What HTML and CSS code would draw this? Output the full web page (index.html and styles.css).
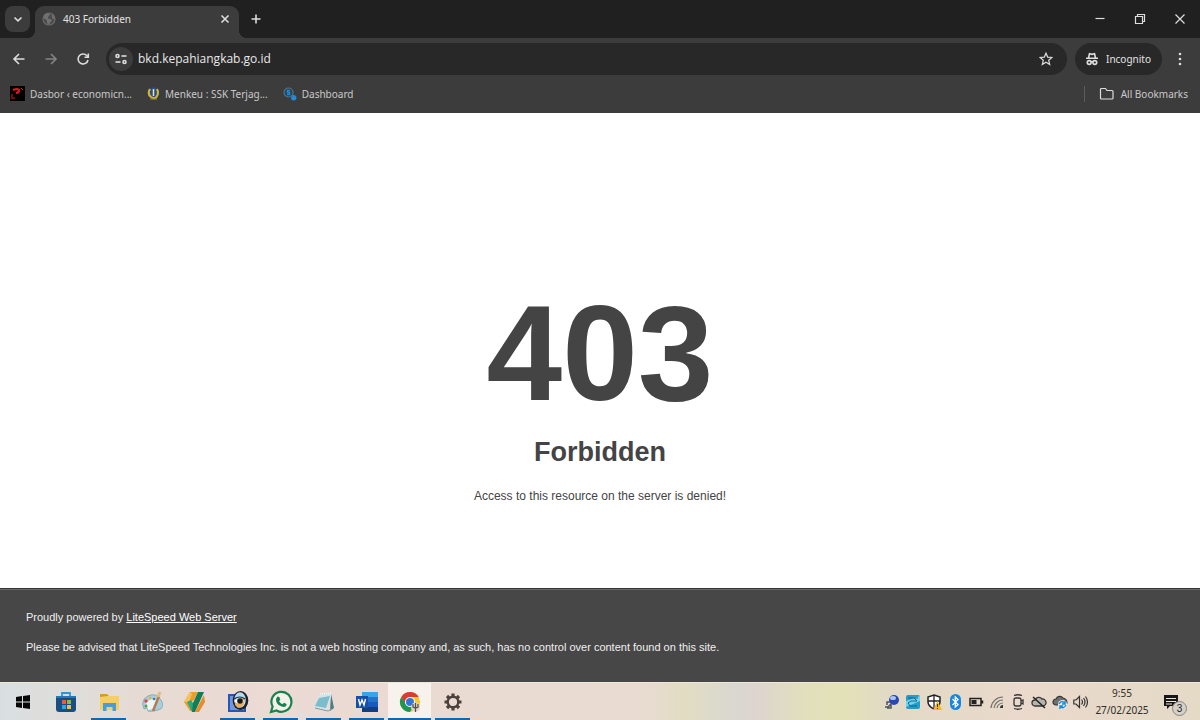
FILE: index.html
```html
<!DOCTYPE html>
<html lang="en">
<head>
<meta charset="utf-8">
<title>403 Forbidden</title>
<link rel="stylesheet" href="styles.css">
</head>
<body>
<header class="browser">
  <div class="tabstrip">
    <button class="tab-search" aria-label="Search tabs"><svg width="10" height="10" viewBox="0 0 10 10"><path class="line bold" d="M1.500 3.500 5 6.800 8.500 3.500"/></svg></button>
    <div class="tab">
      <svg width="14" height="14" viewBox="0 0 14 14"><circle cx="7" cy="7" r="6" fill="#4b4b4b" stroke="#686868" stroke-width="1.200"/><path fill="#707070" d="M2 3.500 5 1l3 .5-.5 2L6 5v1.500l2.500.5 1.500 2-2 1.500L7 13 5 11V8.500L1.500 6zM10 2l2.500 3v3L10 6z"/></svg>
      <span class="tab-title">403 Forbidden</span>
      <button class="icon-btn" aria-label="Close tab"><svg width="10" height="10" viewBox="0 0 10 10"><path class="line bold" d="m1.500 1.500 7 7m0-7-7 7"/></svg></button>
    </div>
    <button class="icon-btn new-tab" aria-label="New tab"><svg width="12" height="12" viewBox="0 0 12 12"><path class="line bold" d="M6 1.500v9M1.500 6h9"/></svg></button>
    <div class="window-controls">
      <button class="icon-btn" aria-label="Minimize"><svg width="12" height="12" viewBox="0 0 12 12"><path class="line" d="M1.500 5.500h9"/></svg></button>
      <button class="icon-btn" aria-label="Restore"><svg width="12" height="12" viewBox="0 0 12 12"><path class="line" d="M1.500 3.500h7v7h-7zM3.500 3.500v-2h7v7h-2"/></svg></button>
      <button class="icon-btn" aria-label="Close"><svg width="12" height="12" viewBox="0 0 12 12"><path class="line" d="m1.500 1.500 9 9m0-9-9 9"/></svg></button>
    </div>
  </div>
  <div class="toolbar">
    <nav class="nav-buttons" aria-label="History">
      <button class="icon-btn" aria-label="Back"><svg width="14" height="14" viewBox="0 0 14 14"><path class="line bold" d="M12.500 7H2.500M7 2 2 7l5 5"/></svg></button>
      <button class="icon-btn dim" aria-label="Forward"><svg width="14" height="14" viewBox="0 0 14 14"><path class="line bold" d="M1.500 7h10M7 2l5 5-5 5"/></svg></button>
      <button class="icon-btn" aria-label="Reload"><svg width="14" height="14" viewBox="0 0 14 14"><path class="line bold" d="M12 8a5 5 0 1 1-1.300-4.500L12 5"/><path class="line bold" d="M12.300 1.500V5.300H8.500"/></svg></button>
    </nav>
    <div class="omnibox">
      <button class="site-info" aria-label="Site information"><svg width="14" height="14" viewBox="0 0 14 14"><g class="line bold"><circle cx="3.500" cy="4" r="1.500"/><path d="M7.500 4H12.500"/><circle cx="10.500" cy="10" r="1.500"/><path d="M1.500 10h5"/></g></svg></button>
      <input class="url" type="text" value="bkd.kepahiangkab.go.id" aria-label="Address">
      <button class="icon-btn" aria-label="Bookmark this page"><svg width="14" height="14" viewBox="0 0 14 14"><path class="line" d="m7 1.200 1.700 3.900 4.200.4-3.200 2.800 1 4.200L7 10.200l-3.700 2.300 1-4.200L1.100 5.500l4.200-.4z"/></svg></button>
    </div>
    <button class="incognito"><svg width="14" height="14" viewBox="0 0 14 14"><g class="line bold"><path d="M3.500 6 4.500 1.800l2.500.6 2.500-.6 1 4.200M1 6.300h12"/><circle cx="4.200" cy="10.500" r="1.900"/><circle cx="9.800" cy="10.500" r="1.900"/><path d="M6 10q1-.8 2 0"/></g></svg>Incognito</button>
    <button class="icon-btn" aria-label="Menu"><svg width="14" height="16" viewBox="0 0 14 16"><g fill="#ddd"><circle cx="7" cy="3" r="1.300"/><circle cx="7" cy="8" r="1.300"/><circle cx="7" cy="13" r="1.300"/></g></svg></button>
  </div>
  <nav class="bookmarks" aria-label="Bookmarks">
    <a href="#"><svg width="15" height="15" viewBox="0 0 15 15"><path fill="#050000" d="M0 0h15v15H0z"/><g fill="none" stroke="#e01818"><path stroke-width="2.200" d="M3 4q5-2 6 0 0 3-3 3"/><path stroke-width="1" d="M11 2l2 2M2 8v5M5 12H3"/></g></svg>Dasbor ‹ economicn...</a>
    <a href="#"><svg width="13" height="13" viewBox="0 0 13 13"><path fill="#284f91" d="M6.500 0 12 3v5L6.500 12 1 8V3z"/><path fill="none" stroke="#d8b72c" stroke-width="2" d="M3 2Q0 7 4 10t6-1q2-3 0-7"/><path stroke="#eee3a0" stroke-width="1.500" d="M6.500 2v7"/><path stroke="#8a8b4b" d="M3 12h7"/></svg>Menkeu : SSK Terjag...</a>
    <a href="#"><svg width="14" height="14" viewBox="0 0 14 14"><circle cx="5.500" cy="5.500" r="4.500" fill="#30414e" stroke="#53758d" stroke-width="1.200"/><path fill="none" stroke="#168ce0" stroke-width="1.500" d="M7 3.500H4.500v2h2v2H4"/><circle cx="10.700" cy="10.700" r="2.700" fill="#218bdc"/><path stroke="#2675b5" d="m8 8 2 2"/></svg>Dashboard</a>
    <a class="all-bookmarks" href="#"><svg width="16" height="14" viewBox="0 0 16 14"><path class="line" d="M2.500 1.500h4l1.500 2h5q1 0 1 1v6.500q0 1-1 1H2.500q-1 0-1-1V2.500q0-1 1-1z"/></svg>All Bookmarks</a>
  </nav>
</header>

<main class="page">
  <h1>403</h1>
  <h2>Forbidden</h2>
  <p>Access to this resource on the server is denied!</p>
</main>
<footer class="powered">
  <p>Proudly powered by <a href="#">LiteSpeed Web Server</a></p>
  <p>Please be advised that LiteSpeed Technologies Inc. is not a web hosting company and, as such, has no control over content found on this site.</p>
</footer>

<div class="taskbar">
  <div class="apps">
    <button aria-label="Start"><svg width="16" height="16" viewBox="0 0 16 16"><path fill="#080808" d="M1 3l6-1v5.500H1zM8 1.900 15 1v6.500H8zM1 8.500h6V14l-6-1zM8 8.500h7V15l-7-1z"/></svg></button>
    <button aria-label="Microsoft Store"><svg width="22" height="22" viewBox="0 0 22 22"><path fill="none" stroke="#2599dc" stroke-width="1.800" d="M7 6V2h8v4"/><path fill="#174f82" d="M1 5h20v13q0 3-3 3H4q-3 0-3-3z"/><path fill="#2379b9" d="M1 5h20v2H1z"/><path fill="#ed5b38" d="M7 9h4v4H7z"/><path fill="#86bd3a" d="M12 9h4v4h-4z"/><path fill="#29a7e8" d="M7 14h4v4H7z"/><path fill="#f3bf38" d="M12 14h4v4h-4z"/></svg></button>
    <button class="running" aria-label="File Explorer"><svg width="22" height="22" viewBox="0 0 22 22"><path fill="#d79a28" d="M2 3h7l2 2v4H2z"/><path fill="#f7ce61" d="M2 6l8-1h11v14H2z"/><path fill="#4b9bd9" d="M5 12h13v8h-3.500v-4h-6v4H5z"/></svg></button>
    <button aria-label="Paint"><svg width="22" height="22" viewBox="0 0 22 22"><path fill="#a9cede" stroke="#6f9daf" stroke-width=".7" d="M3 18Q-1 9 7 5t13 4-3 10-10 1l-1-3z"/><path fill="#edf5f5" d="M5 12q5-6 11-3l-4 9-5 1z"/><path stroke="#b77b50" stroke-width="2.500" d="m12 20 6-15"/><path stroke="#e4bb84" stroke-width="3" d="m17 6 2-5"/><circle cx="5" cy="10" r="1.700" fill="#d84545"/><circle cx="9" cy="7" r="1.500" fill="#e9b43b"/><circle cx="5" cy="15" r="1.500" fill="#5aa046"/><circle cx="13" cy="8" r="1.300" fill="#4577b4"/></svg></button>
    <button aria-label="Office tools"><svg width="22" height="22" viewBox="0 0 22 22"><path fill="#ed9e28" d="M6 1h8l-4 8-4 3 2 8H6L0 11z"/><path fill="#f6c15d" d="m6 1 2 2-3 8-5 0z"/><path fill="#2aa87b" d="m3 11 4-2 4 6-1 6H8z"/><path fill="#127e57" d="m14 1 6 0-9 20H8l1-9z"/><path fill="#e98b28" d="m20 4 1 7-6 10h-4z"/></svg></button>
    <button class="running" aria-label="Image viewer"><svg width="22" height="22" viewBox="0 0 22 22"><path fill="#2558b5" d="M1 3h18v18H1z"/><path fill="#7196dc" d="M3 5h14v14H3z"/><ellipse cx="13.500" cy="9.500" rx="7.800" ry="9.500" fill="#1b1f2a"/><ellipse cx="13" cy="9" rx="5.800" ry="7.700" fill="#b8dced"/><path fill="#e6ae5e" d="M8 10q4-4 10-2l-2 7-5 2-3-3z"/><path fill="#fff" d="M7 10q6-5 10 0-5 5-10 0z"/><circle cx="13" cy="10" r="2.800" fill="#17171d"/><path fill="none" stroke="#1d3447" stroke-width="1.200" d="M7 8q6-4 11 0"/></svg></button>
    <button class="running" aria-label="WhatsApp"><svg width="24" height="24" viewBox="0 0 24 24"><path fill="#f6f0ea" stroke="#16834f" stroke-width="2.200" d="m2 22 1.600-5.500A10 10 0 1 1 7.500 20.500z"/><path fill="#16834f" d="M8.500 6.500 10.300 7l1 2.500-1.200 1.700q1.200 2.100 3.300 3l1.600-1.400 2.600 1.200q.1 3-3.300 3Q8 15.500 7 10.500q-.2-2.500 1.500-4z"/></svg></button>
    <button class="running" aria-label="Notepad"><svg width="22" height="22" viewBox="0 0 22 22"><path fill="#4d7e88" d="m18 2 3 15-4 3z"/><path fill="#d3e5e8" d="m7 3 12-1-5 17-13-3z"/><path fill="#7cbccb" d="m6 7 11-2-4 12-11-2z"/><path stroke="#fff" stroke-dasharray="1" d="m7 3 11-1"/><path fill="none" stroke="#789ca6" d="m2 17 13 3 4-2"/></svg></button>
    <button class="running" aria-label="Word"><svg width="22" height="22" viewBox="0 0 22 22"><path fill="#3aa5e4" d="M6 1h16v6H6z"/><path fill="#2674c7" d="M6 6h16v5H6z"/><path fill="#185abd" d="M6 11h16v5H6z"/><path fill="#133e84" d="M6 16h16v5H6z"/><path fill="#164eab" d="M0 5h12v12H0z"/><path fill="none" stroke="#fff" stroke-width="1.400" d="m2.500 8 1.500 6 2-5 2 5 1.500-6"/></svg></button>
    <button class="running active" aria-label="Chrome"><svg width="22" height="22" viewBox="0 0 22 22"><circle cx="11" cy="11" r="10" fill="#f6c72e"/><path fill="#dc3b32" d="M2.300 6a10 10 0 0 1 17.400 0H11l-4.300 7.500z"/><path fill="#209655" d="M2.300 6A10 10 0 0 0 11 21l4-7-7 .5z"/><circle cx="11" cy="11" r="5" fill="#fff"/><circle cx="11" cy="11" r="4" fill="#3375d6"/><circle cx="16.500" cy="16" r="4.500" fill="#ddd3c5"/><path fill="none" stroke="#554b48" stroke-width="1.200" d="M14 13v3l2.500 1 2.500-1v-3m-2.500-1v9"/></svg></button>
    <button class="running" aria-label="Settings"><svg width="20" height="20" viewBox="0 0 20 20"><g fill="none" stroke="#4b403c"><circle cx="10" cy="10" r="5.300" stroke-width="2.400"/><path stroke-width="3.200" d="M10 1.500v3m0 11v3M1.500 10h3m11 0h3M4 4l2.100 2.100m7.800 7.800L16 16M4 16l2.100-2.100m7.800-7.800L16 4"/></g></svg></button>
  </div>
  <div class="tray">
    <svg width="16" height="16" viewBox="0 0 16 16"><circle cx="10" cy="6" r="5" fill="#2946b5"/><ellipse cx="9" cy="4" rx="3" ry="2" fill="#aec3f2"/><path fill="none" stroke="#4f5360" stroke-width="1.500" d="M7 10 4 13H1m6-3v4H3m3-6H3v3"/></svg>
    <svg width="16" height="16" viewBox="0 0 16 16"><rect x="1" y="1" width="14" height="14" rx="2" fill="#249bc9"/><path fill="#72d3ee" d="M1 7 15 2v5L1 13z"/><path fill="none" stroke="#176489" d="M3 4h6l3 3H6L3 9l2 3h7M10 4h3"/></svg>
    <svg width="16" height="16" viewBox="0 0 16 16"><path fill="#fff" stroke="#222" stroke-width="1.500" d="m8 1 6 2v5q0 4-6 7-6-3-6-7V3z"/><path stroke="#222" stroke-width="1.300" d="M8 1v13M2 7h12"/><path fill="#f4b91b" d="m11.500 7 4.500 9H7z"/><path stroke="#332" d="M11.500 10v3m0 1v1"/></svg>
    <svg width="16" height="16" viewBox="0 0 16 16"><rect x="3" y="0" width="11" height="16" rx="5.500" fill="#1685e4"/><path fill="none" stroke="#fff" stroke-width="1.300" d="m5.500 5 5.500 5.500L8.300 13V3L11 5.500 5.500 11"/></svg>
    <svg width="16" height="16" viewBox="0 0 16 16"><path fill="none" stroke="#222" stroke-width="1.500" d="M2 4.500h11v7H2zM14.500 6.500v3"/><path fill="#222" d="M3.500 6h5v4h-5z"/></svg>
    <svg width="16" height="16" viewBox="0 0 16 16"><path fill="none" stroke="#72706c" stroke-width="1.200" d="M2 14A12 12 0 0 1 14 3M5 14a9 9 0 0 1 9-8M8 14a6 6 0 0 1 6-5"/><path fill="#333" d="M11 14a3 3 0 0 1 3-3v3z"/></svg>
    <svg width="16" height="16" viewBox="0 0 16 16"><g fill="none" stroke="#343434" stroke-width="1.300"><rect x="4" y="4" width="7" height="8" rx="2"/><path d="M11 7l2-1v4l-2-1M4 1.500q4-1.500 8 0M4 14.500q4 1.500 8 0"/></g></svg>
    <svg width="16" height="16" viewBox="0 0 16 16"><path fill="#b9b4ab" stroke="#353535" stroke-width="1.300" d="M4 12a3 3 0 0 1 0-6 4 4 0 0 1 7-1 3.500 3.500 0 0 1 1 7z"/><path stroke="#222" stroke-width="1.500" d="m2 3 12 11"/></svg>
    <svg width="16" height="16" viewBox="0 0 16 16"><path fill="#706f6d" stroke="#353535" stroke-width="1.200" d="M4 11a3 3 0 0 1 0-6 4 4 0 0 1 7-1q4 1 4 5l-2 2z"/><circle cx="10.500" cy="10.500" r="4.500" fill="#e9eff3"/><path fill="none" stroke="#1689d8" stroke-width="1.400" d="M7 10q3-5 6 0m0-3v3h-3m4 1q-3 5-6 1m0 3v-3h3"/></svg>
    <svg width="16" height="16" viewBox="0 0 16 16"><path fill="none" stroke="#333" stroke-width="1.200" d="M.8 6H3l3.500-3.500v11L3 10H.8zM8.500 5.500q2 2.500 0 5M10.500 4q3 4 0 8M12.500 2.500q4 5.500 0 11"/></svg>
  </div>
  <div class="clock"><time>9:55</time><time>27/02/2025</time></div>
  <button class="notifications" aria-label="3 notifications"><svg width="16" height="16" viewBox="0 0 16 16"><path fill="#171717" d="M1 1h14v11H7l-3 3v-3H1z"/><path stroke="#eee5d4" stroke-width="1" d="M3 4.500h10M3 7.500h10M3 10h6"/></svg><span class="badge">3</span></button>
</div>
</body>
</html>
```
FILE: styles.css
```css
* { box-sizing: border-box; }
body {
  margin: 0;
  min-height: 100vh;
  display: flex;
  flex-direction: column;
  font-family: "Liberation Sans", Arial, sans-serif;
  background: #fff;
}
button {
  border: 0;
  padding: 0;
  background: none;
  color: inherit;
  font: inherit;
  display: flex;
  align-items: center;
  justify-content: center;
}
svg { display: block; flex: none; }
.line { fill: none; stroke: #ddd; stroke-width: 1.2; }
.bold { stroke-width: 1.6; }
.icon-btn { width: 20px; height: 24px; flex: none; }
.dim { opacity: 0.45; }

.browser {
  background: #3c3c3c;
  color: #e3e3e3;
  font: 10px/16px "Noto Sans", "Open Sans", sans-serif;
}
.tabstrip {
  display: flex;
  align-items: center;
  height: 38px;
  padding: 0 10px 0 5px;
  background: #202020;
}
.tab-search {
  width: 25px;
  height: 26px;
  border-radius: 8px;
  background: #3c3c3c;
}
.tab {
  position: relative;
  display: flex;
  align-items: center;
  gap: 7px;
  width: 204px;
  height: 32px;
  margin: 6px 0 0 5px;
  padding: 0 4px 6px 7px;
  border-radius: 9px 9px 0 0;
  background: #3c3c3c;
}
.tab::before,
.tab::after {
  content: "";
  position: absolute;
  bottom: 0;
  width: 8px;
  height: 8px;
}
.tab::before {
  right: 100%;
  background: radial-gradient(circle at 0 0, #202020 8px, #3c3c3c 8px);
}
.tab::after {
  left: 100%;
  background: radial-gradient(circle at 100% 0, #202020 8px, #3c3c3c 8px);
}
.tab-title { flex: 1; white-space: nowrap; }
.new-tab { margin-left: 7px; }
.window-controls { display: flex; gap: 20px; margin-left: auto; }

.toolbar {
  display: flex;
  align-items: center;
  gap: 8px;
  height: 42px;
  padding: 0 10px 0 9px;
}
.nav-buttons { display: flex; gap: 12px; margin-right: 5px; }
.omnibox {
  display: flex;
  align-items: center;
  flex: 1;
  gap: 5px;
  height: 32px;
  padding: 0 11px 0 3px;
  border-radius: 16px;
  background: #282828;
}
.site-info {
  width: 24px;
  height: 24px;
  border-radius: 50%;
  background: #3c3c3c;
}
.url {
  flex: 1;
  min-width: 0;
  border: 0;
  padding: 0;
  outline: 0;
  background: none;
  color: #e8e8e8;
  font: 12px/18px "Open Sans", "Noto Sans", sans-serif;
}
.incognito {
  gap: 7px;
  height: 32px;
  padding: 0 11px 0 10px;
  border-radius: 16px;
  background: #282828;
}
.bookmarks {
  display: flex;
  align-items: center;
  gap: 15px;
  height: 33px;
  padding: 0 12px 6px 10px;
}
.bookmarks a {
  display: flex;
  align-items: center;
  gap: 5px;
  color: #c9c9c9;
  text-decoration: none;
  white-space: nowrap;
}
.bookmarks .all-bookmarks {
  gap: 6px;
  margin-left: auto;
  padding-left: 14px;
  border-left: 1px solid #5c5c5c;
}

.page {
  flex: 1;
  display: flex;
  flex-direction: column;
  align-items: center;
  padding-top: 165px;
  color: #444;
}
.page h1 { margin: 0; font-size: 136px; line-height: 150px; }
.page h2 { margin: 8px 0 0; font-size: 27px; line-height: 32px; }
.page p { margin: 18px 0 0; font-size: 12px; line-height: 20px; }

.powered {
  padding: 20px 26px 27px;
  border-top: 1px solid #333;
  box-shadow: inset 0 1px #6a6a6a;
  background: #474747;
  color: #f0f0f0;
  font-size: 11px;
  line-height: 16px;
}
.powered p { margin: 0; }
.powered p + p { margin-top: 14px; }
.powered a { color: #fff; }

.taskbar {
  display: flex;
  align-items: stretch;
  height: 38px;
  border-top: 1px solid #eee8d9;
  background: linear-gradient(90deg, #d9dfe0 0, #e6dbd3 12%, #ecdad4 22%, #e8dbd0 54%, #e2ddc2 57%, #d9d8d0 61%, #ddd5cf 63%, #e1dfbd 67%, #e3e2b7 70%, #e1dac5 74%, #ead9cc 85%, #e4dac6 100%);
}
.apps { display: flex; padding-left: 1px; }
.apps button { width: 43px; }
.apps .running { background: linear-gradient(#1267ad, #1267ad) bottom / 35px 2px no-repeat; }
.apps .active { background: linear-gradient(#1267ad, #1267ad) bottom / 100% 2px no-repeat, #f8f2ed; }
.tray { display: flex; align-items: center; gap: 5px; margin-left: auto; }
.clock {
  display: flex;
  flex-direction: column;
  align-items: center;
  justify-content: center;
  width: 66px;
  color: #302d28;
  font: 10px/17px "Noto Sans", "Open Sans", sans-serif;
}
.notifications { position: relative; width: 32px; margin-right: 13px; }
.badge {
  position: absolute;
  right: 0;
  bottom: 4px;
  width: 15px;
  height: 15px;
  border: 1px solid #858585;
  border-radius: 50%;
  background: #d5d1c9;
  color: #222;
  font-size: 10px;
  line-height: 13px;
}
```
